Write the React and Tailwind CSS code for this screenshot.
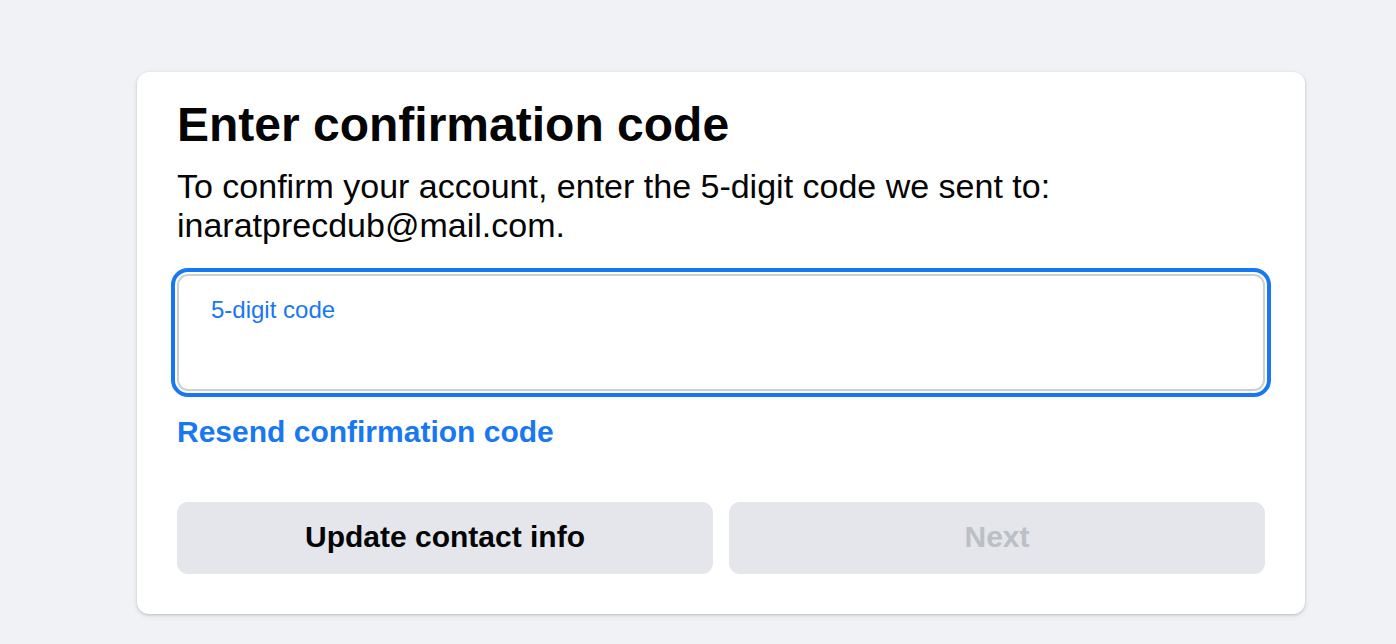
import React, { useState } from "react";

const ConfirmCode = () => {
  const [code, setCode] = useState("");

  return (
    <div className="min-h-[644px] w-full bg-[#f0f2f5] pt-[72px] pl-[137px] font-['Liberation_Sans',Arial,sans-serif]">
      <div className="w-[1168px] rounded-[12px] bg-white px-[40px] pt-[25px] pb-[40px] shadow-[0_1px_3px_rgba(0,0,0,0.18),0_2px_6px_rgba(0,0,0,0.06)]">
        <h1 className="text-[48px] leading-[56px] font-bold text-[#050505]">
          Enter confirmation code
        </h1>
        <p className="mt-[14px] text-[34px] leading-[39px] text-[#050505]">
          To confirm your account, enter the 5-digit code we sent to:
          <br />
          inaratprecdub@mail.com.
        </p>

        {/* code input, shown focused */}
        <div className="mt-[29px] h-[117px] rounded-[11px] border-2 border-[#ccd0d5] outline-[4px] outline-offset-[2px] outline-solid outline-[#1877f2] px-[32px] pt-[20px]">
          <label
            htmlFor="code"
            className="block text-[24px] leading-[28px] text-[#1877f2]"
          >
            5-digit code
          </label>
          <input
            id="code"
            type="text"
            value={code}
            onChange={(e) => setCode(e.target.value)}
            className="mt-[4px] w-full bg-transparent text-[34px] leading-[40px] text-[#050505] outline-none"
          />
        </div>

        <a
          href="#"
          className="mt-[23px] block text-[30px] leading-[36px] font-bold text-[#1877f2]"
        >
          Resend confirmation code
        </a>

        <div className="mt-[52px] flex gap-[16px]">
          <button className="flex h-[72px] flex-1 items-center justify-center rounded-[11px] bg-[#e4e6eb] pb-[4px] text-[30px] font-bold text-[#050505]">
            Update contact info
          </button>
          <button
            disabled
            className="flex h-[72px] flex-1 items-center justify-center rounded-[11px] bg-[#e4e6eb] pb-[4px] text-[30px] font-bold text-[#bcc0c4]"
          >
            Next
          </button>
        </div>
      </div>
    </div>
  );
};

export default ConfirmCode;
